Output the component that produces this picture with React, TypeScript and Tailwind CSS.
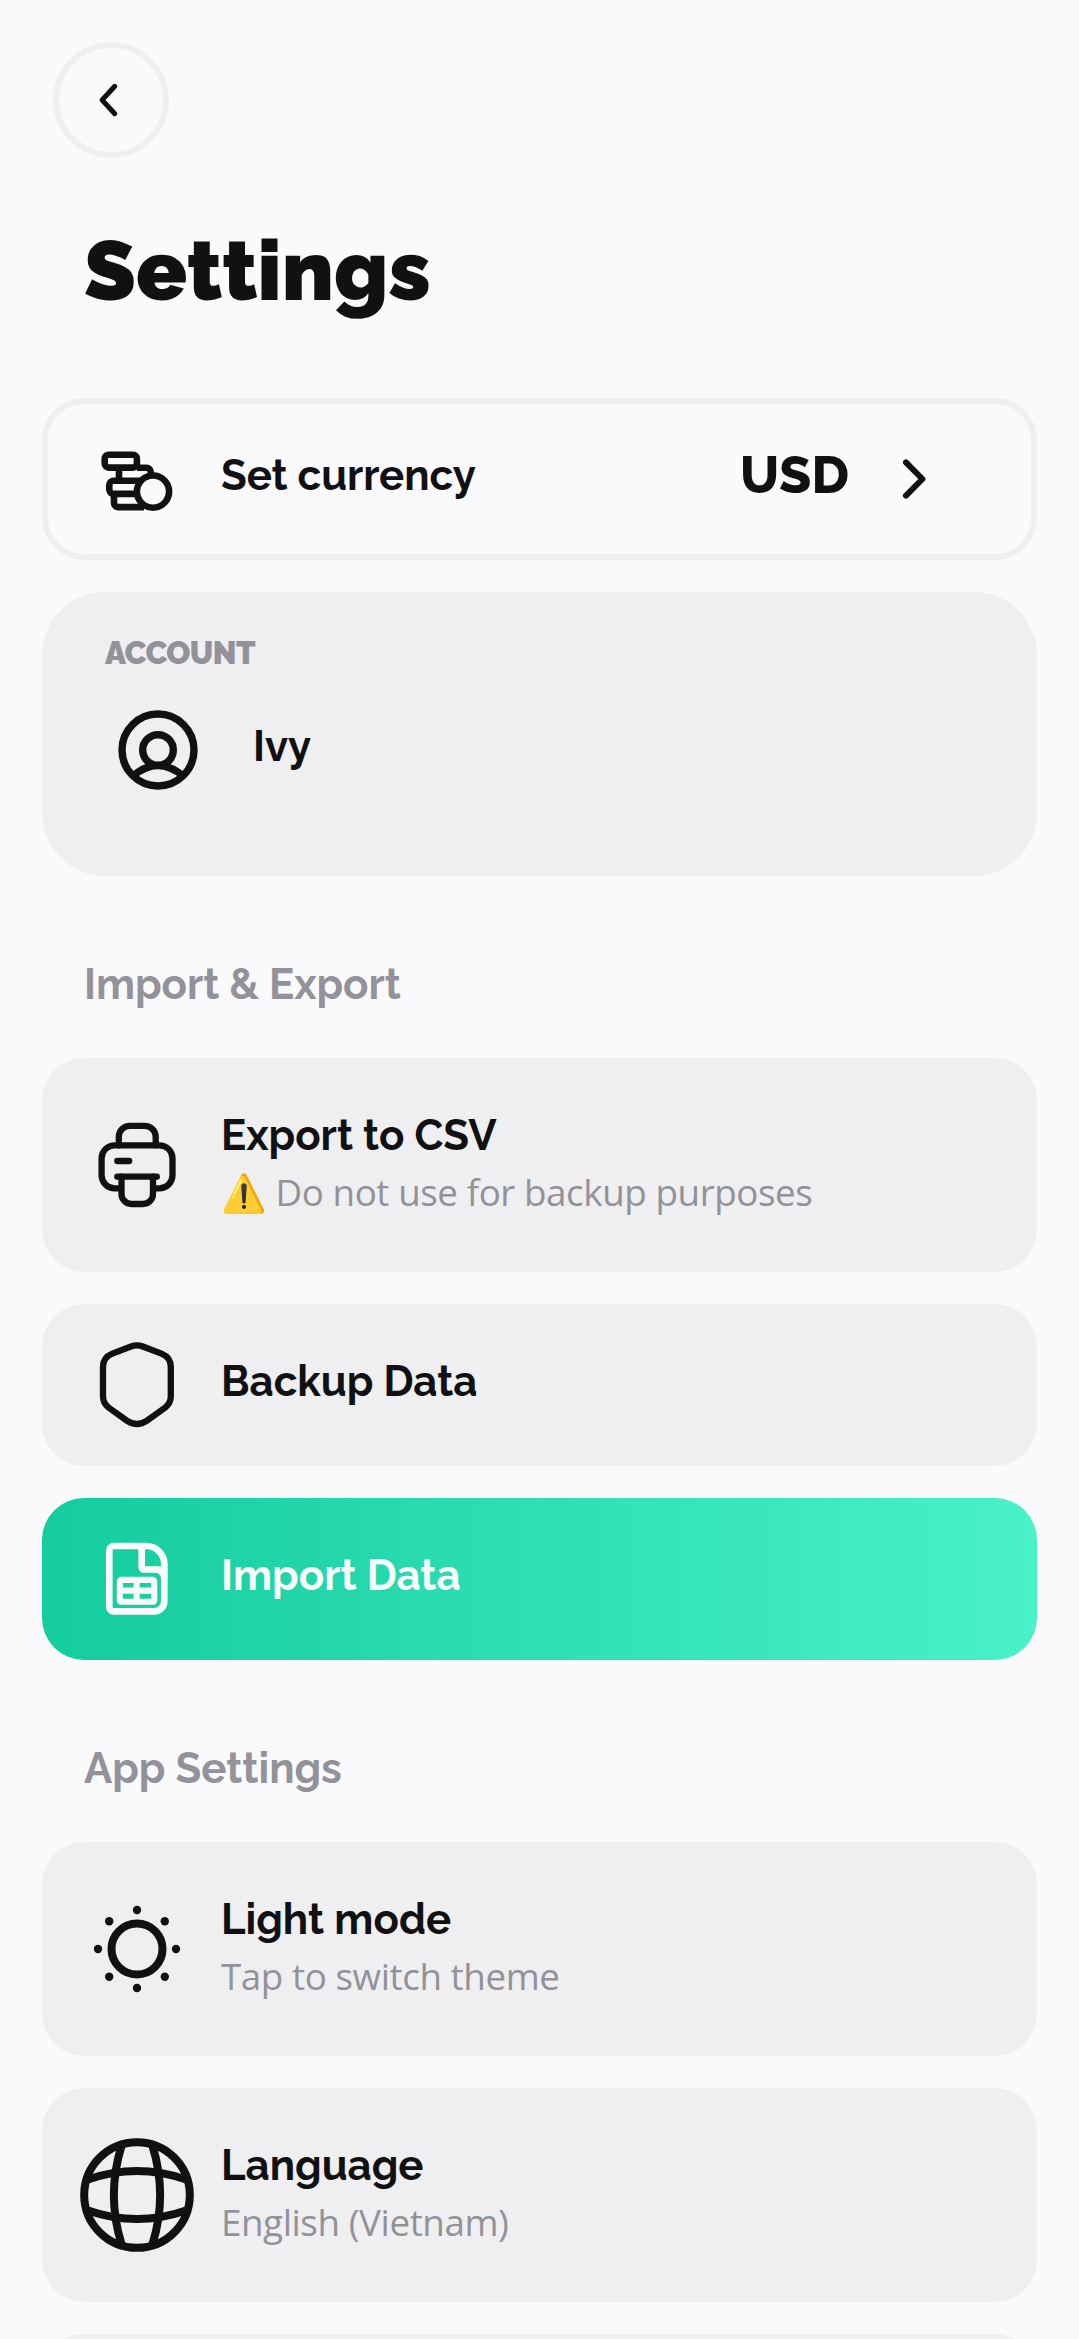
import React from 'react';

const iconBase = {
  viewBox: '0 0 116 116',
  fill: 'none',
  stroke: 'currentColor',
  strokeLinecap: 'round',
  strokeLinejoin: 'round',
  className: 'block size-[116px] shrink-0',
} as const;

function CoinsIcon() {
  return (
    <svg {...iconBase} strokeWidth="6.6" strokeLinecap="butt">
      <rect x="25.7" y="33.7" width="32.2" height="12.9" rx="4" />
      <path d="M40 46.7V59.7M58 46.7H67.3A4.5 4.5 0 0 1 71.8 51.2V55" />
      <path d="M64 59.7H34.6A4.3 4.3 0 0 0 30.3 64V68.6A4.3 4.3 0 0 0 34.6 72.9H59" />
      <path d="M35 72V81.8A4.3 4.3 0 0 0 39.3 86.1H65" />
      <circle cx="74" cy="70.6" r="16.1" />
    </svg>
  );
}

function PrinterIcon() {
  return (
    <svg {...iconBase} strokeWidth="6.3">
      <path d="M39.8 38.3V30A11.2 11.2 0 0 1 51 18.8H65.5A11.2 11.2 0 0 1 76.7 30V38.3" />
      <path
        d="M42.5 81.3H35.6A13 13 0 0 1 22.6 68.3V51.3A13 13 0 0 1 35.6 38.3H80.5A13 13 0 0 1 93.5 51.3V68.3A13 13 0 0 1 80.5 81.3H74"
        strokeLinecap="butt"
      />
      <path d="M38.3 54H50.2M38.3 69.7H77.8" />
      <path d="M42.5 69.7V87A10 10 0 0 0 52.5 97H64A10 10 0 0 0 74 87V69.7" />
    </svg>
  );
}

function ShieldIcon() {
  return (
    <svg {...iconBase} strokeWidth="6.3">
      <path d="M52 19.5Q57.9 17.2 63.8 19.5L82.5 26.6Q91.8 30.5 91.8 39.8V69.3Q91.8 76.1 86.3 80.5L68 93.6Q57.9 100.3 47.8 93.6L29.5 80.5Q24 76.1 24 69.3V39.8Q24 30.5 33.3 26.6Z" />
    </svg>
  );
}

function SheetIcon() {
  return (
    <svg {...iconBase} strokeWidth="6.7">
      <path d="M34.6 25H67.3A18 18 0 0 1 85.3 43V80.3A10 10 0 0 1 75.3 90.3H34.6A4.3 4.3 0 0 1 30.3 86V29.3A4.3 4.3 0 0 1 34.6 25Z" />
      <path d="M62.7 25V46.3A2.2 2.2 0 0 0 64.9 48.5H76A9 9 0 0 1 85.3 57" strokeLinecap="butt" />
      <path d="M85.3 43V48.5H76" strokeWidth="6" strokeLinejoin="miter" />
      <g strokeWidth="6.1" strokeLinecap="butt">
        <rect x="40.8" y="58.9" width="34.4" height="21.9" rx="1.4" />
        <path d="M40.8 69.6H75.2M57.6 58.9V80.8" />
      </g>
    </svg>
  );
}

function SunIcon() {
  const dots = [
    [58, 19], [58, 97], [19, 58], [97, 58],
    [30.2, 30.3], [85.8, 30.3], [30.2, 85.7], [85.8, 85.7],
  ];
  return (
    <svg {...iconBase} strokeWidth="8">
      <circle cx="58" cy="58" r="25.5" />
      <g fill="currentColor" stroke="none">
        {dots.map(([cx, cy]) => (
          <circle key={`${cx}-${cy}`} cx={cx} cy={cy} r="4.2" />
        ))}
      </g>
    </svg>
  );
}

function GlobeIcon() {
  return (
    <svg {...iconBase} strokeWidth="8" strokeLinecap="butt">
      <circle cx="58" cy="58" r="52.8" />
      <path d="M9 42.5Q58 25.5 107 42.5M9 73.5Q58 90.5 107 73.5" />
      <path d="M42.5 9Q27.2 58 42.5 107M73.5 9Q88.8 58 73.5 107" />
    </svg>
  );
}

function UserIcon() {
  return (
    <svg viewBox="0 0 84 84" fill="none" stroke="currentColor" strokeWidth="7.4" className="block size-[84px]">
      <circle cx="42" cy="42" r="36" />
      <circle cx="42" cy="42" r="15.3" />
      <path d="M17 68Q42 47 67 68" />
    </svg>
  );
}

type RowProps = {
  icon: React.ReactNode;
  title: string;
  subtitle?: string;
  tone?: string;
};

function SettingsRow({ icon, title, subtitle, tone = 'bg-[#efeff1]' }: RowProps) {
  return (
    <button
      className={`flex w-full shrink-0 items-center rounded-[42px] pl-[37px] text-left ${tone} ${subtitle ? 'h-[214px]' : 'h-[162px]'}`}
    >
      {icon}
      <div className="ml-[26px] self-start whitespace-nowrap pt-[53px]">
        <div className="text-[42px] leading-[50px] font-bold">{title}</div>
        {subtitle && (
          <div className="mt-[6px] font-['Open_Sans','Noto_Color_Emoji',sans-serif] text-[36.75px] leading-[50px] tracking-[-0.42px] text-[#939199]">
            {subtitle}
          </div>
        )}
      </div>
    </button>
  );
}

export default function App() {
  return (
    <main className="flex h-[2339px] w-[1079px] flex-col overflow-hidden bg-[linear-gradient(180deg,#fafafa_130px,#fafafc_180px)] px-[42px] pt-[42px] font-[Raleway,sans-serif] text-[#111113]">
      <button className="ml-[11px] h-[116px] w-[116px] shrink-0 rounded-full border-[6px] border-[#efeff1]">
        <svg viewBox="0 0 104 104" fill="none" stroke="currentColor" strokeWidth="5" strokeLinecap="round" strokeLinejoin="round" className="block size-[104px]">
          <path d="M55.8 38.3L43.1 52L55.8 65.7" />
        </svg>
      </button>

      <h1 className="mt-[63px] ml-[42px] text-[84px] leading-[100px] font-black tracking-[0.1px]">Settings</h1>

      <button className="mt-[77px] flex h-[162px] w-full shrink-0 items-center rounded-[42px] border-[6px] border-[#efeff1] pr-[77px] pl-[31px] text-left">
        <CoinsIcon />
        <span className="ml-[26px] self-start pt-[47px] text-[42px] leading-[50px] font-bold tracking-[-0.08px]">Set currency</span>
        <span className="mr-[21px] ml-auto self-start pt-[40px] text-[52.5px] leading-[62px] font-extrabold">USD</span>
        <svg viewBox="0 0 84 84" fill="none" stroke="currentColor" strokeWidth="6" strokeLinecap="round" strokeLinejoin="round" className="block size-[84px]">
          <path d="M36 25.4L52.4 42L36 58.6" />
        </svg>
      </button>

      <section className="mt-8 h-[284px] shrink-0 rounded-[63px] bg-[#efeff1] pt-[42px] pl-[63px]">
        <div className="text-[31.5px] leading-[38px] font-black tracking-[-0.55px] text-[#939199]">ACCOUNT</div>
        <div className="mt-9 ml-[11px] flex">
          <UserIcon />
          <div className="ml-[53px] pt-[14px] text-[42px] leading-[50px] font-bold">Ivy</div>
        </div>
      </section>

      <h2 className="mt-[84px] ml-[42px] text-[42px] leading-[50px] font-bold tracking-[-0.06px] text-[#939199]">Import &amp; Export</h2>
      <div className="mt-[48px] flex flex-col gap-8">
        <SettingsRow icon={<PrinterIcon />} title="Export to CSV" subtitle="⚠️ Do not use for backup purposes" />
        <SettingsRow icon={<ShieldIcon />} title="Backup Data" />
        <SettingsRow
          icon={<SheetIcon />}
          title="Import Data"
          tone="bg-[linear-gradient(90deg,#14cc9e,#49f2c8)] text-[#fafafa]"
        />
      </div>

      <h2 className="mt-[84px] ml-[42px] text-[42px] leading-[50px] font-bold text-[#939199]">App Settings</h2>
      <div className="mt-[48px] flex flex-col gap-8">
        <SettingsRow icon={<SunIcon />} title="Light mode" subtitle="Tap to switch theme" />
        <SettingsRow icon={<GlobeIcon />} title="Language" subtitle="English (Vietnam)" />
        <div className="h-[162px] shrink-0 rounded-[42px] bg-[#efeff1]" />
      </div>
    </main>
  );
}
